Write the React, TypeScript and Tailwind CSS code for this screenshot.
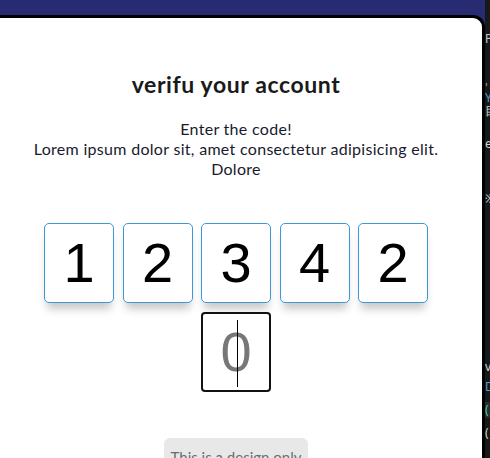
import React from "react";

const digits = ["1", "2", "3", "4", "2"];

function Strip() {
  const items: { top: number; text: string; color: string; bg?: string }[] = [
    { top: 31, text: "P", color: "#c8c8c8" },
    { top: 80, text: "'", color: "#ce9178" },
    { top: 90, text: "Y", color: "#569cd6" },
    { top: 103, text: "目", color: "#d4d4d4" },
    { top: 136, text: "e", color: "#d4d4d4" },
    { top: 191, text: "※", color: "#d4d4d4" },
    { top: 359, text: "v", color: "#d4d4d4" },
    { top: 379, text: "D", color: "#569cd6" },
    { top: 402, text: "(", color: "#4ec9b0", bg: "#2d2d2d" },
    { top: 425, text: "(", color: "#d4d4d4" },
  ];
  return (
    <div className="relative w-[5px] shrink-0 h-[458px] bg-[#181818] overflow-hidden">
      {items.map((it, i) => (
        <div
          key={i}
          className="absolute left-0 w-[5px] h-[16px] text-[12px] leading-[16px] overflow-hidden"
          style={{ top: it.top, color: it.color, background: it.bg }}
        >
          {it.text}
        </div>
      ))}
    </div>
  );
}

export default function App() {
  return (
    <div className="flex w-[490px] h-[458px] overflow-hidden bg-[#181818]">
      <div className="w-[485px] h-[458px] bg-[#282a72] pt-[15px] overflow-hidden shrink-0">
        <div className="ml-[-10px] w-[495px] h-[460px] bg-white border-t-[3px] border-r-[3px] border-black rounded-tr-[12px] font-['Lato',sans-serif]">
          <div className="pt-[52px] flex flex-col items-center">
            <h1 className="text-[23px] leading-[28px] font-bold text-[#1a1a1a] tracking-[0.6px]">
              verifu your account
            </h1>
            <div className="mt-[21px] text-[16px] leading-[20px] text-[#1a1a2e] text-center tracking-[0.3px]">
              <p>Enter the code!</p>
              <p>Lorem ipsum dolor sit, amet consectetur adipisicing elit.</p>
              <p>Dolore</p>
            </div>
            <div className="mt-[44px] w-[400px] flex flex-wrap justify-center gap-x-[8.5px] gap-y-[9px]">
              {digits.map((d, i) => (
                <div
                  key={i}
                  className="w-[70px] h-[80px] border border-[#3a99d8] rounded-[5px] bg-white shadow-[0_9px_9px_-3px_rgba(0,0,0,0.22)] flex items-center justify-center font-['Liberation_Sans',Arial,sans-serif] text-[56px] leading-none text-black"
                >
                  {d}
                </div>
              ))}
              <div className="relative w-[70px] h-[80px] border-2 border-[#111] rounded-[4px] bg-white flex items-center justify-center font-['Liberation_Sans',Arial,sans-serif] text-[56px] leading-none text-[#777777]">
                0
                <span className="absolute left-[34px] top-[6px] w-px h-[67px] bg-black" />
              </div>
            </div>
            <div className="mt-[46px] w-[144px] h-[40px] rounded-[6px] bg-[#e8e8e8] text-[15px] text-[#6e6e6e] flex justify-center pt-[8px]">
              This is a design only
            </div>
          </div>
        </div>
      </div>
      <Strip />
    </div>
  );
}
